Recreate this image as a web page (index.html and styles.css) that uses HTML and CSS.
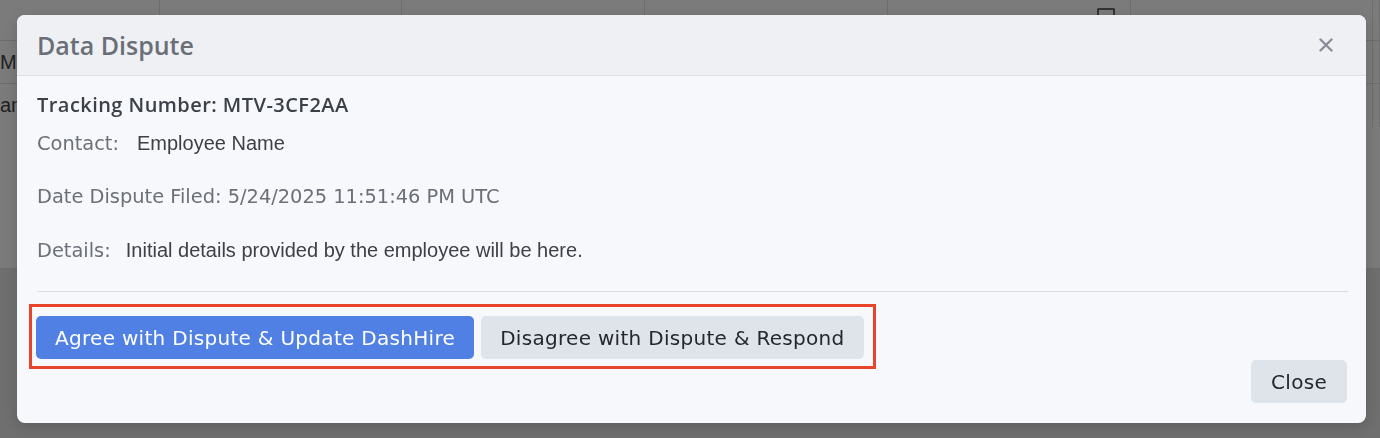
FILE: index.html
```html
<!DOCTYPE html>
<html>
<head>
    <link rel="stylesheet" href="styles.css">
</head>
<body>
    <div class="page">
        <div class="tabela">
            <div class="linha cabecalho">
                <div class="celula"></div>
                <div class="celula"></div>
                <div class="celula"></div>
                <div class="celula"></div>
                <div class="celula calendario"><span class="iconeCal"></span></div>
                <div class="celula"></div>
                <div class="celula"></div>
            </div>
            <div class="linha">
                <div class="celula">Mi</div>
                <div class="celula"></div>
                <div class="celula"></div>
                <div class="celula"></div>
                <div class="celula"></div>
                <div class="celula"></div>
                <div class="celula"></div>
            </div>
            <div class="linha alta">
                <div class="celula">an</div>
                <div class="celula"></div>
                <div class="celula"></div>
                <div class="celula"></div>
                <div class="celula"></div>
                <div class="celula"></div>
                <div class="celula"></div>
            </div>
        </div>
    </div>

    <div class="overlay">
        <div class="modal">
            <div class="modalHeader">
                <h2>Data Dispute</h2>
                <button class="fecharX" aria-label="Close">
                    <svg width="14" height="14" viewBox="0 0 14 14">
                        <path d="M1.5 1.5 L12.5 12.5 M12.5 1.5 L1.5 12.5" stroke="#8b8e94" stroke-width="2.4" stroke-linecap="round" fill="none"/>
                    </svg>
                </button>
            </div>

            <div class="modalBody">
                <p class="tracking">Tracking Number: MTV-3CF2AA</p>
                <p class="campo"><span class="rotulo">Contact:</span><span class="valor">Employee Name</span></p>
                <p class="campo espaco"><span class="rotulo">Date Dispute Filed: 5/24/2025 11:51:46 PM UTC</span></p>
                <p class="campo espaco"><span class="rotulo">Details:</span><span class="valor detalhes">Initial details provided by the employee will be here.</span></p>
            </div>

            <hr class="divisor">

            <div class="modalFooter">
                <div class="destaque">
                    <button class="botao botaoAzul">Agree with Dispute &amp; Update DashHire</button>
                    <button class="botao botaoCinza">Disagree with Dispute &amp; Respond</button>
                </div>
                <button class="botao botaoCinza botaoFechar">Close</button>
            </div>
        </div>
    </div>
</body>
</html>
```

FILE: styles.css
```css
body {
    margin: 0;
    padding: 0;
    background-color: #6f6f6f;
    font-family: 'DejaVu Sans', 'Open Sans', sans-serif;
    overflow: hidden;
}
.page {
    width: 1380px;
    height: 438px;
}
.tabela {
    background-color: #7b7b7b;
    height: 268px;
    border-bottom: 1px solid #6c6c6c;
}
.linha {
    display: grid;
    grid-template-columns: 160px 242px 243px 243px 243px 242px 7px;
    height: 43px;
    border-bottom: 1px solid #6c6c6c;
    box-sizing: border-box;
}
.linha.cabecalho {
    height: 41px;
}
.linha.alta {
    height: 43px;
    border-bottom: none;
}
.celula {
    border-right: 1px solid #6e6e6e;
    font-family: 'Liberation Sans', Arial, sans-serif;
    font-size: 20px;
    color: #1f1f1f;
    display: flex;
    align-items: center;
}
.calendario {
    justify-content: flex-end;
    align-items: flex-start;
    padding-right: 15px;
}
.iconeCal {
    width: 14px;
    height: 8px;
    margin-top: 8px;
    border: 2px solid #333;
    border-bottom: none;
    border-radius: 2px 2px 0 0;
}

.overlay {
    position: fixed;
    top: 15px;
    left: 17px;
}
.modal {
    width: 1349px;
    height: 408px;
    background-color: #f7f8fc;
    border-radius: 8px;
    overflow: hidden;
    box-shadow: 0px 4px 14px rgba(0, 0, 0, 0.15);
}
.modalHeader {
    height: 60px;
    background-color: #eff0f4;
    border-bottom: 1px solid #dcdfe4;
    display: flex;
    align-items: center;
    justify-content: space-between;
    padding: 0 33px 0 20px;
}
.modalHeader h2 {
    margin: 0;
    font-family: 'Open Sans', sans-serif;
    font-size: 25px;
    font-weight: 600;
    color: #6a6f77;
    line-height: 30px;
}
.fecharX {
    background: none;
    border: none;
    padding: 0;
    width: 14px;
    height: 14px;
    display: flex;
    cursor: pointer;
}
.modalBody {
    padding: 17px 20px 0 20px;
}
.modalBody p {
    margin: 0;
    line-height: 24px;
}
.tracking {
    font-family: 'Open Sans', sans-serif;
    font-size: 20px;
    font-weight: 600;
    letter-spacing: 0.45px;
    color: #3c4047;
}
.campo {
    margin-top: 14px !important;
    display: flex;
    align-items: baseline;
}
.campo.espaco {
    margin-top: 29px !important;
}
.rotulo {
    font-size: 19.4px;
    color: #6b6f77;
}
.valor {
    font-family: 'Liberation Sans', Arial, sans-serif;
    font-size: 20px;
    color: #3d4046;
    margin-left: 18px;
}
.valor.detalhes {
    margin-left: 15px;
}
.divisor {
    border: none;
    border-top: 1px solid #d9dce1;
    margin: 28px 18px 0 20px;
}
.modalFooter {
    display: flex;
    justify-content: space-between;
    align-items: flex-start;
    padding: 12px 19px 0 12px;
}
.destaque {
    display: flex;
    gap: 7px;
    border: 3px solid #e8442b;
    padding: 9px 9px 7px 4px;
}
.botao {
    height: 43px;
    padding: 0 19px;
    border: none;
    border-radius: 5px;
    font-family: 'DejaVu Sans', sans-serif;
    font-size: 20px;
    letter-spacing: 0.3px;
    cursor: pointer;
}
.botaoAzul {
    background-color: #5080e4;
    color: #ffffff;
}
.botaoCinza {
    background-color: #dfe4ea;
    color: #24272b;
}
.botaoFechar {
    margin-top: 56px;
    padding: 0 20px;
}
```
